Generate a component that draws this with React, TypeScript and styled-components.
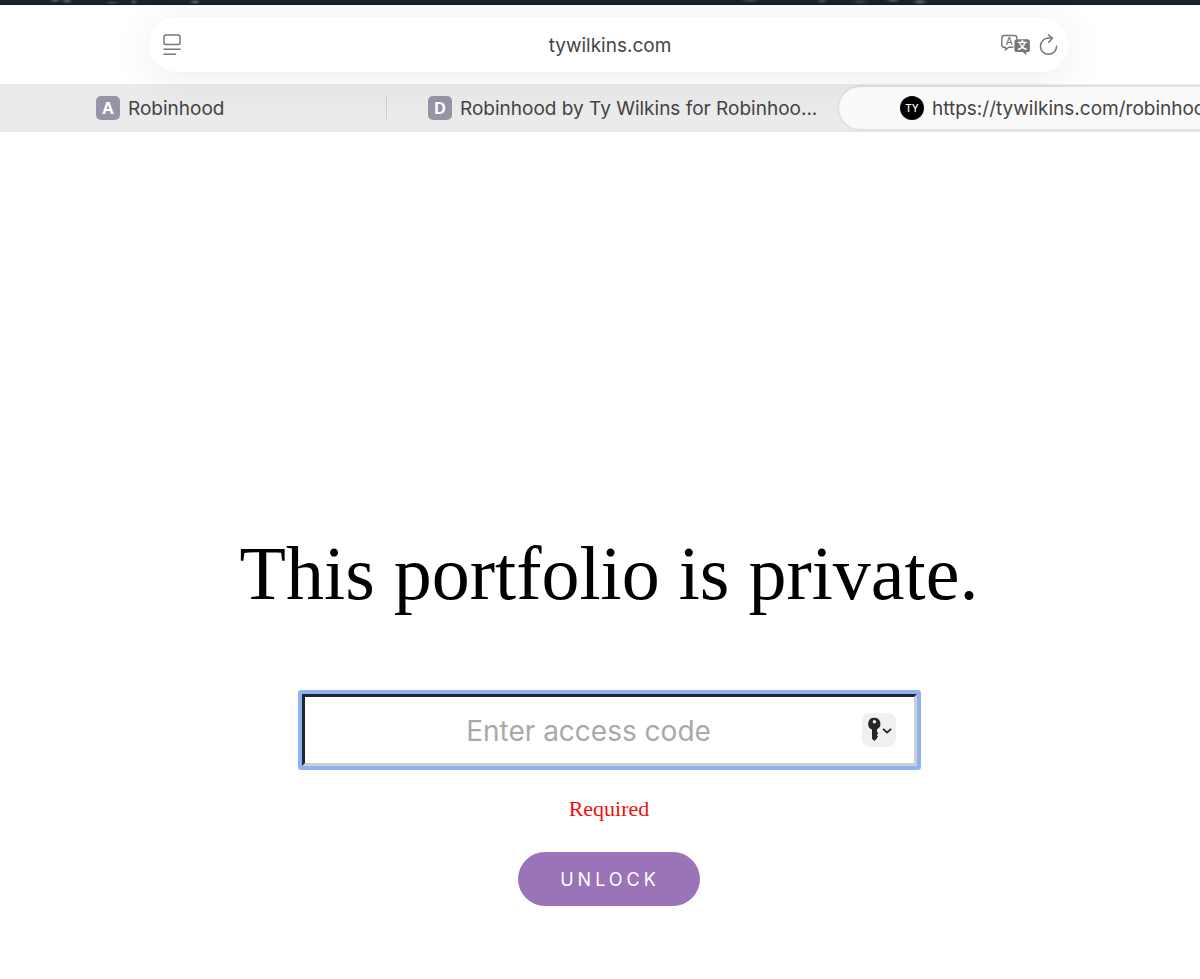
import React from 'react';
import styled, { createGlobalStyle } from 'styled-components';

const sans = `Inter, "Liberation Sans", sans-serif`;
const serif = `"Liberation Serif", "Times New Roman", serif`;

const GlobalStyle = createGlobalStyle`
  *, *::before, *::after { box-sizing: border-box; }
  body { margin: 0; background: #fff; overflow-x: hidden; }
  button, input { font: inherit; }
`;

const Page = styled.div`
  min-height: 100vh;
  overflow: hidden;
`;

const Backdrop = styled.div`
  height: 5px;
  background:
    radial-gradient(7px 3px at 55px 0, #566166, transparent),
    radial-gradient(6px 3px at 67px 1px, #566166, transparent),
    radial-gradient(8px 3px at 112px 3px, #3b474c, transparent),
    radial-gradient(4px 3px at 134px 2px, #4a5559, transparent),
    radial-gradient(6px 3px at 195px 2px, #566166, transparent),
    radial-gradient(10px 3px at 750px 0, #465156, transparent),
    radial-gradient(6px 3px at 822px 1px, #465156, transparent),
    radial-gradient(10px 3px at 860px 2px, #36424a, transparent),
    radial-gradient(8px 3px at 893px 0, #566166, transparent),
    radial-gradient(8px 3px at 920px 2px, #5a666b, transparent),
    #18232a;
  border-bottom: 1px solid #101a24;
`;

const Toolbar = styled.header`
  position: relative;
  z-index: 1;
  padding: 12px 131px 12px 149px;
`;

const AddressBar = styled.div`
  display: grid;
  grid-template-columns: 60px 1fr 60px;
  align-items: center;
  height: 55px;
  padding: 0 11px 0 13px;
  border-radius: 28px;
  background: #fff;
  box-shadow: 0 6px 44px rgba(0, 0, 0, 0.08), 0 0 3px rgba(0, 0, 0, 0.02);
`;

const Address = styled.input`
  width: 100%;
  height: 26px;
  padding: 2px 0 0;
  border: 0;
  outline: 0;
  background: transparent;
  color: #444;
  font-family: ${sans};
  font-size: 19px;
  line-height: 24px;
  text-align: center;
`;

const Actions = styled.div`
  display: flex;
  justify-content: flex-end;
  gap: 8px;
`;

const IconButton = styled.button`
  display: flex;
  padding: 0;
  border: 0;
  background: transparent;
  color: #777;
`;

const TabBar = styled.nav`
  display: grid;
  grid-template-columns: 387fr 452fr 361fr;
  height: 48px;
  background: #ebebeb;
  border-bottom: 1px solid #e6e6e6;
`;

const Tab = styled.a<{ $inset: number; $active?: boolean; $divided?: boolean }>`
  position: relative;
  display: flex;
  align-items: center;
  gap: 8px;
  min-width: 0;
  padding: 1px 14px 0 ${(p) => p.$inset}px;
  color: #444;
  font-family: ${sans};
  font-size: 19px;
  line-height: 24px;
  text-decoration: none;

  ${(p) =>
    p.$divided &&
    `&::after {
      content: '';
      position: absolute;
      right: 0;
      top: 12px;
      height: 24px;
      border-right: 1px solid #cdcdcd;
    }`}

  ${(p) =>
    p.$active &&
    `z-index: 2;
    margin: 3px 0 2px;
    padding-right: 0;
    padding-top: 0;
    border-radius: 22px 0 0 22px;
    background: #fafafa;
    box-shadow: 0 0 3px rgba(0, 0, 0, 0.16);`}
`;

const TabTitle = styled.span<{ $clip?: boolean }>`
  min-width: 0;
  padding-top: 2px;
  overflow: hidden;
  white-space: nowrap;
  text-overflow: ${(p) => (p.$clip ? 'clip' : 'ellipsis')};
`;

const Favicon = styled.span<{ $round?: boolean }>`
  display: flex;
  flex: none;
  align-items: center;
  justify-content: center;
  width: 24px;
  height: 24px;
  border-radius: ${(p) => (p.$round ? '12px' : '5px')};
  background: ${(p) => (p.$round ? '#000' : '#9695a5')};
  color: #fff;
  font-size: ${(p) => (p.$round ? '10px' : '16px')};
  font-weight: ${(p) => (p.$round ? 500 : 700)};
`;

const Gate = styled.main`
  display: flex;
  flex-direction: column;
  align-items: center;
  padding: 396px 0 72px 18px;
`;

const Title = styled.h1`
  margin: 0;
  color: #000;
  font-family: ${serif};
  font-size: 76px;
  font-weight: 400;
  line-height: 90px;
  white-space: nowrap;
`;

const Form = styled.form`
  display: flex;
  flex-direction: column;
  align-items: center;
  width: 100%;
  margin-top: 76px;
`;

const Field = styled.div`
  position: relative;
  width: 100%;
  max-width: 615px;
  border-radius: 1px;
  box-shadow: 0 0 0 4px #8fb2f0;
`;

const CodeInput = styled.input`
  display: block;
  width: 100%;
  height: 72px;
  padding: 2px 41px 0 0;
  border: 3px solid;
  border-color: #1d2736 #cfcfcf #cfcfcf #1d2736;
  border-radius: 0;
  outline: 0;
  background: #fff;
  color: #000;
  font-family: ${sans};
  font-size: 28px;
  text-align: center;

  &::placeholder { color: #a9a9a9; opacity: 1; }
`;

const KeyButton = styled.button`
  position: absolute;
  top: 19px;
  right: 21px;
  display: flex;
  width: 34px;
  height: 34px;
  padding: 0;
  border: 0;
  border-radius: 8px;
  background: #f0f0f0;
`;

const ErrorText = styled.p`
  margin: 31px 0;
  color: #f00f0f;
  font-family: ${serif};
  font-size: 22px;
  line-height: 24px;
`;

const Unlock = styled.button`
  height: 54px;
  padding: 1px 40px 0 42px;
  border: 0;
  border-radius: 27px;
  background: #9a73b9;
  color: #fff;
  font-family: ${sans};
  font-size: 18px;
  letter-spacing: 4px;
`;

const ReaderIcon = () => (
  <svg width="20" height="22" viewBox="0 0 20 22" fill="none" stroke="currentColor" strokeWidth="1.5" strokeLinecap="round">
    <rect x="2" y="1" width="16" height="9.6" rx="2" />
    <path d="M2 15.3h16M2 20.3h11.4" />
  </svg>
);

const TranslateIcon = () => (
  <svg width="30" height="22" viewBox="0 0 30 22">
    <path
      d="M4 1.5H14.5a2.3 2.3 0 0 1 2.3 2.3V5.6M13.5 13.3H8.6L5.6 16V13.3H4A2.3 2.3 0 0 1 1.8 11V3.8A2.3 2.3 0 0 1 4 1.5"
      fill="none" stroke="currentColor" strokeWidth="1.4" strokeLinejoin="round"
    />
    <text x="9.2" y="11" textAnchor="middle" fontFamily="Inter, sans-serif" fontSize="10" fontWeight="500" fill="currentColor">A</text>
    <path d="M17 5.2H27.3a2.6 2.6 0 0 1 2.6 2.6v7.6a2.6 2.6 0 0 1-2.6 2.6H26.4v3l-3.8-3H17a2.6 2.6 0 0 1-2.6-2.6V7.8a2.6 2.6 0 0 1 2.6-2.6z" fill="currentColor" />
    <text x="22.2" y="15.2" textAnchor="middle" fontFamily='"Noto Sans CJK SC", sans-serif' fontSize="10" fontWeight="700" fill="#fff">文</text>
  </svg>
);

const ReloadIcon = () => (
  <svg width="20" height="22" viewBox="0 0 20 22" fill="none" stroke="currentColor" strokeWidth="1.5" strokeLinecap="round" strokeLinejoin="round">
    <path d="M18.6 12.2a8.1 8.1 0 1 1-8.1-8.1h3.6" />
    <path d="M10.4 .9l4 3.4-3.6 4" />
  </svg>
);

const KeyIcon = () => (
  <svg width="34" height="34" viewBox="0 0 34 34">
    <path
      fillRule="evenodd"
      d="M12.3 4.8a6 6 0 0 1 2.7 11.4v2.6l1.3 1.5-1.5 1.6 1.3 1.7-1.3 1.5v.6l-2.5 2.3-2.3-2.3V16.400a6 6 0 0 1 2.300-11.600zm.1 2.300a1.700 1.700 0 1 0 0 3.400 1.700 1.700 0 0 0 0-3.400z"
      fill="#262626"
    />
    <path d="M21.6 16.3l3.5 3.3 3.5-3.3" fill="none" stroke="#262626" strokeWidth="1.8" strokeLinecap="round" strokeLinejoin="round" />
  </svg>
);

export default function App() {
  return (
    <Page>
      <GlobalStyle />
      <Backdrop />
      <Toolbar>
        <AddressBar>
          <IconButton type="button" aria-label="Page menu"><ReaderIcon /></IconButton>
          <Address aria-label="Address" defaultValue="tywilkins.com" />
          <Actions>
            <IconButton type="button" aria-label="Translate"><TranslateIcon /></IconButton>
            <IconButton type="button" aria-label="Reload"><ReloadIcon /></IconButton>
          </Actions>
        </AddressBar>
      </Toolbar>
      <TabBar aria-label="Tabs">
        <Tab href="#robinhood" $inset={96} $divided>
          <Favicon>A</Favicon>
          <TabTitle>Robinhood</TabTitle>
        </Tab>
        <Tab href="#dribbble" $inset={41}>
          <Favicon>D</Favicon>
          <TabTitle>Robinhood by Ty Wilkins for Robinhoo...</TabTitle>
        </Tab>
        <Tab href="#portfolio" $inset={61} $active aria-current="page">
          <Favicon $round>TY</Favicon>
          <TabTitle $clip>https://tywilkins.com/robinhood</TabTitle>
        </Tab>
      </TabBar>
      <Gate>
        <Title>This portfolio is private.</Title>
        <Form onSubmit={(e) => e.preventDefault()}>
          <Field>
            <CodeInput type="text" aria-label="Access code" aria-describedby="code-error" placeholder="Enter access code" />
            <KeyButton type="button" aria-label="Saved passwords"><KeyIcon /></KeyButton>
          </Field>
          <ErrorText id="code-error">Required</ErrorText>
          <Unlock type="submit">UNLOCK</Unlock>
        </Form>
      </Gate>
    </Page>
  );
}
